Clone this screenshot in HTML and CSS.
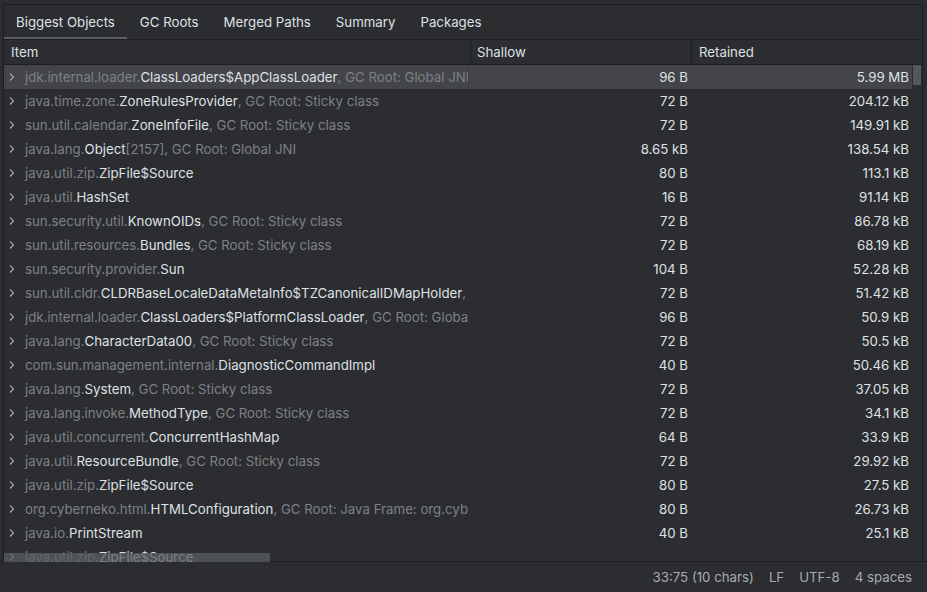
FILE: index.html
```html
<!DOCTYPE html>
<html>
<head>
<meta charset="utf-8">
<link rel="stylesheet" href="styles.css">
</head>
<body>
<div class="app">
  <div class="frame">
    <div class="tabs">
      <div class="tab active">Biggest Objects</div>
      <div class="tab">GC Roots</div>
      <div class="tab">Merged Paths</div>
      <div class="tab">Summary</div>
      <div class="tab">Packages</div>
    </div>
    <div class="table">
      <div class="thead">
        <div class="th c-item">Item</div>
        <div class="th c-shallow">Shallow</div>
        <div class="th c-ret">Retained</div>
      </div>
      <div class="tbody">
        <div class="rows" id="rows"></div>
        <div class="vscroll"></div>
        <div class="hscroll"></div>
      </div>
    </div>
  </div>
  <div class="status">
    <span>33:75 (10 chars)</span>
    <span>LF</span>
    <span>UTF-8</span>
    <span>4 spaces</span>
  </div>
</div>
<script src="app.js"></script>
</body>
</html>
```

FILE: styles.css
```css
* { box-sizing: border-box; }
html, body { margin: 0; padding: 0; }
body {
  background: #2b2d30;
  font-family: Inter, "Noto Sans", sans-serif;
  font-size: 13.25px;
  color: #dfe1e5;
  width: 927px;
  height: 592px;
  overflow: hidden;
}
.app {
  display: flex;
  flex-direction: column;
  height: 592px;
}
.frame {
  margin: 4px 4px 0 3px;
  border-top: 1px solid #1e1f22;
  border-left: 1px solid #1e1f22;
  border-right: 1px solid #1e1f22;
  flex: 0 0 558px;
  display: flex;
  flex-direction: column;
  overflow: hidden;
}
.tabs {
  display: flex;
  height: 35px;
  border-bottom: 1px solid #1e1f22;
}
.tab {
  padding: 0 12.5px;
  line-height: 35px;
  height: 34px;
  color: #dfe1e5;
  border-bottom: 2px solid transparent;
}
.tab:first-child { padding-left: 12px; }
.tab.active { border-bottom-color: #5a5d63; }
.table {
  flex: 1;
  display: flex;
  flex-direction: column;
  min-height: 0;
}
.thead {
  display: flex;
  height: 25px;
  border-bottom: 1px solid #1e1f22;
  padding-right: 10px;
}
.th {
  line-height: 24px;
  padding-left: 7px;
  color: #dfe1e5;
}
.c-item { width: 466px; flex: none; }
.c-shallow { width: 221px; flex: none; border-left: 1px solid #1e1f22; padding-left: 6px; }
.c-ret { width: 221px; flex: none; border-left: 1px solid #1e1f22; }
.tbody {
  flex: 1;
  position: relative;
  overflow: hidden;
}
.rows { display: flex; flex-direction: column; padding-right: 10px; }
.row {
  display: flex;
  height: 24px;
  line-height: 24px;
  flex: none;
}
.row.sel { background: #43454a; }
.cell-item {
  width: 465px;
  flex: none;
  overflow: hidden;
  white-space: nowrap;
  display: flex;
  align-items: center;
  border-right: 1px solid transparent;
}
.row.sel .cell-item { border-right-color: #3a3c40; }
.chev {
  width: 21px;
  flex: none;
  display: flex;
  align-items: center;
  padding-left: 4px;
}
.pkg, .extra { color: #7e8187; }
.cls { color: #dfe1e5; }
.num {
  text-align: right;
  flex: none;
  color: #dfe1e5;
}
.n-sh { width: 222px; padding-right: 3px; }
.n-ret { width: 221px; padding-right: 3px; }
.vscroll {
  position: absolute;
  right: 1px;
  top: 0;
  width: 8px;
  height: 20px;
  background: #55575b;
}
.hscroll {
  position: absolute;
  left: 0;
  bottom: 0;
  width: 266px;
  height: 9px;
  background: rgba(90, 93, 99, 0.75);
}
.status {
  flex: 1;
  border-top: 1px solid #1e1f22;
  display: flex;
  justify-content: flex-end;
  align-items: center;
  padding-right: 15px;
  color: #a8abb0;
  margin-top: -1px;
}
.status span { margin-left: 15px; }
.status span:first-child { margin-left: 0; }
```

FILE: app.js
```js
var data = [
  ["jdk.internal.loader.", "ClassLoaders$AppClassLoader", ", GC Root: Global JNI", "96 B", "5.99 MB"],
  ["java.time.zone.", "ZoneRulesProvider", ", GC Root: Sticky class", "72 B", "204.12 kB"],
  ["sun.util.calendar.", "ZoneInfoFile", ", GC Root: Sticky class", "72 B", "149.91 kB"],
  ["java.lang.", "Object", "[2157], GC Root: Global JNI", "8.65 kB", "138.54 kB"],
  ["java.util.zip.", "ZipFile$Source", "", "80 B", "113.1 kB"],
  ["java.util.", "HashSet", "", "16 B", "91.14 kB"],
  ["sun.security.util.", "KnownOIDs", ", GC Root: Sticky class", "72 B", "86.78 kB"],
  ["sun.util.resources.", "Bundles", ", GC Root: Sticky class", "72 B", "68.19 kB"],
  ["sun.security.provider.", "Sun", "", "104 B", "52.28 kB"],
  ["sun.util.cldr.", "CLDRBaseLocaleDataMetaInfo$TZCanonicalIDMapHolder", ", GC Root: Sticky class", "72 B", "51.42 kB"],
  ["jdk.internal.loader.", "ClassLoaders$PlatformClassLoader", ", GC Root: Global JNI", "96 B", "50.9 kB"],
  ["java.lang.", "CharacterData00", ", GC Root: Sticky class", "72 B", "50.5 kB"],
  ["com.sun.management.internal.", "DiagnosticCommandImpl", "", "40 B", "50.46 kB"],
  ["java.lang.", "System", ", GC Root: Sticky class", "72 B", "37.05 kB"],
  ["java.lang.invoke.", "MethodType", ", GC Root: Sticky class", "72 B", "34.1 kB"],
  ["java.util.concurrent.", "ConcurrentHashMap", "", "64 B", "33.9 kB"],
  ["java.util.", "ResourceBundle", ", GC Root: Sticky class", "72 B", "29.92 kB"],
  ["java.util.zip.", "ZipFile$Source", "", "80 B", "27.5 kB"],
  ["org.cyberneko.html.", "HTMLConfiguration", ", GC Root: Java Frame: org.cyberneko", "80 B", "26.73 kB"],
  ["java.io.", "PrintStream", "", "40 B", "25.1 kB"],
  ["java.util.zip.", "ZipFile$Source", "", "", ""]
];
var chev = '<svg width="8" height="10" viewBox="0 0 8 10"><path d="M2 1.5 L5.5 5 L2 8.5" fill="none" stroke="#a0a3a8" stroke-width="1.2"/></svg>';
var html = "";
data.forEach(function (d, i) {
  html += '<div class="row' + (i === 0 ? ' sel' : '') + '">' +
    '<div class="cell-item"><span class="chev">' + chev + '</span>' +
    '<span class="pkg">' + d[0] + '</span><span class="cls">' + d[1] + '</span><span class="extra">' + d[2] + '</span></div>' +
    '<div class="num n-sh">' + d[3] + '</div>' +
    '<div class="num n-ret">' + d[4] + '</div></div>';
});
document.getElementById("rows").innerHTML = html;
```
